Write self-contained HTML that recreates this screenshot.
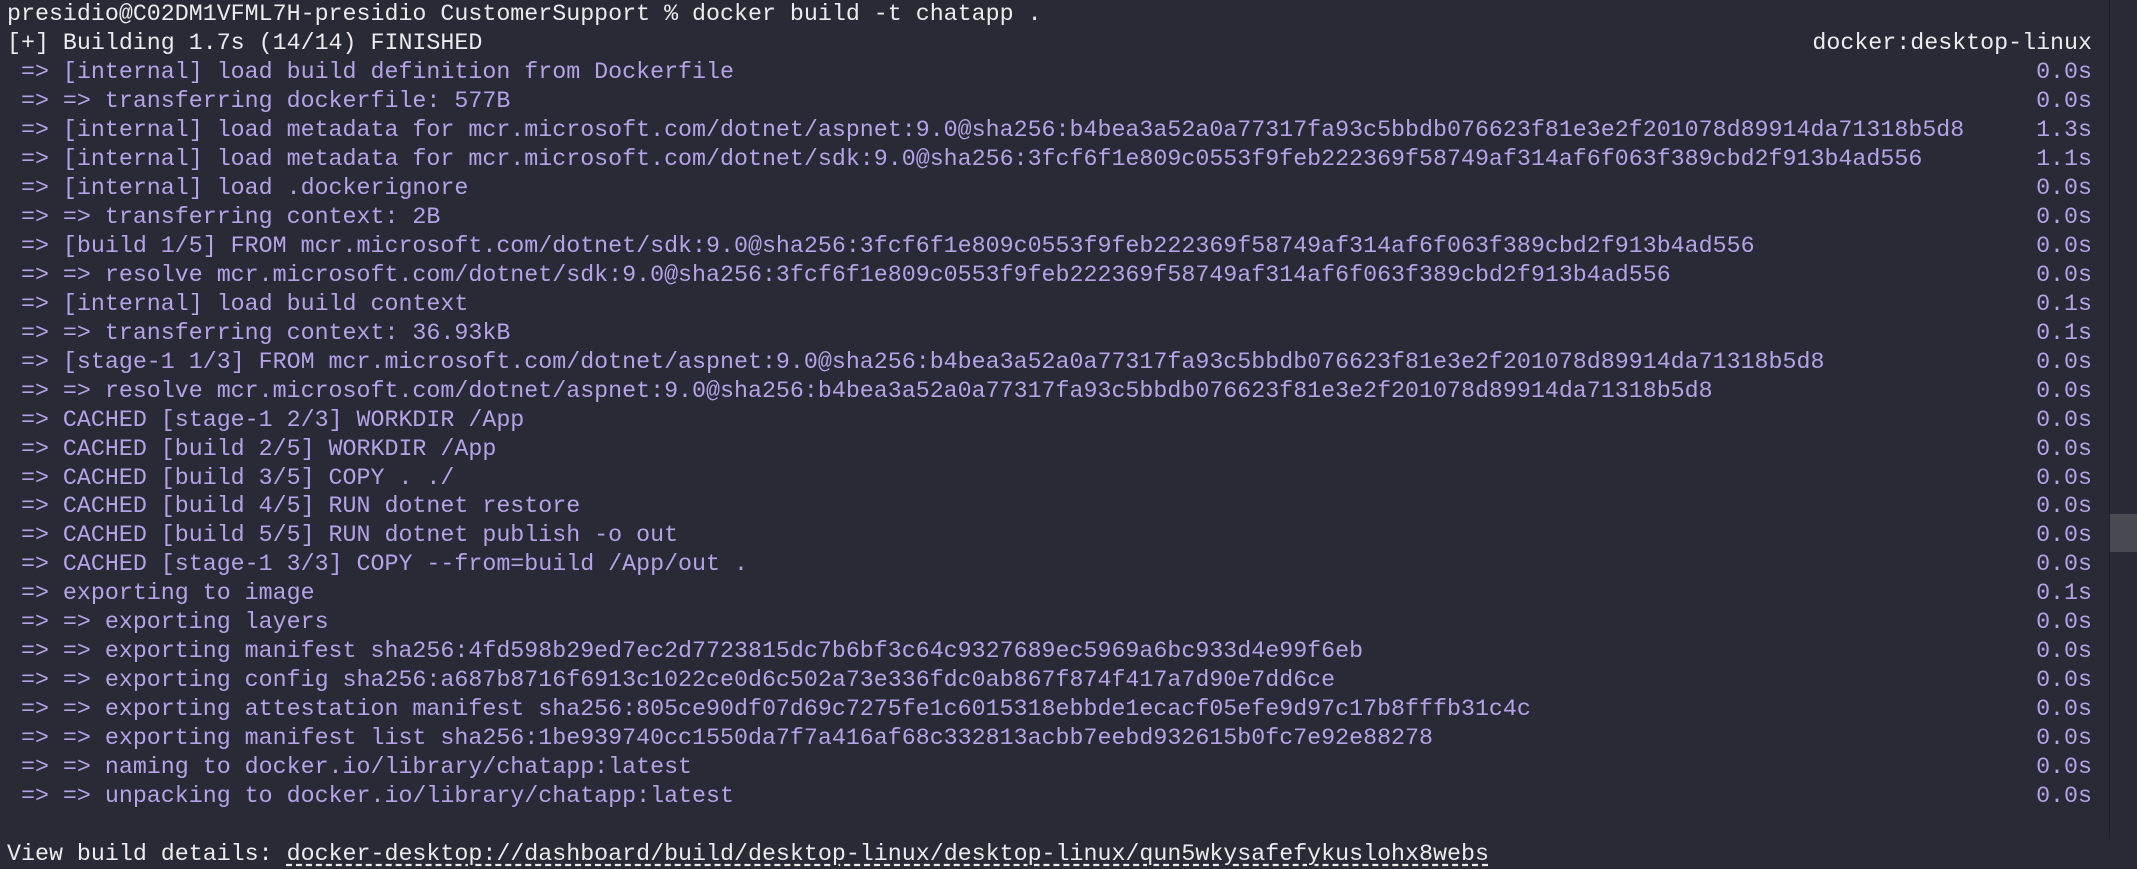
<!DOCTYPE html>
<html><head><meta charset="utf-8"><style>
html,body{margin:0;padding:0;background:#282a36;width:2137px;height:839px;overflow:hidden}
#t{position:absolute;left:7px;top:0px;width:2085px;font-family:"Liberation Mono",monospace;font-size:23.3px;line-height:28.97px;color:#b6a2e8}
.l{height:28.97px;position:relative;white-space:pre}
.l .r{position:absolute;right:0;top:0}
.w{color:#ececec}
.u{text-decoration:underline dashed;text-underline-offset:4px}
#sb{position:absolute;left:2109px;top:0;width:1px;height:839px;background:#1e1f27}
#th{position:absolute;left:2110px;top:514px;width:27px;height:38px;background:#4a4b52}
</style></head><body>
<div id="t"><div class="l w">presidio@C02DM1VFML7H-presidio CustomerSupport % docker build -t chatapp .</div><div class="l w">[+] Building 1.7s (14/14) FINISHED<span class="r">docker:desktop-linux</span></div><div class="l"> =&gt; [internal] load build definition from Dockerfile<span class="r">0.0s</span></div><div class="l"> =&gt; =&gt; transferring dockerfile: 577B<span class="r">0.0s</span></div><div class="l"> =&gt; [internal] load metadata for mcr.microsoft.com/dotnet/aspnet:9.0@sha256:b4bea3a52a0a77317fa93c5bbdb076623f81e3e2f201078d89914da71318b5d8<span class="r">1.3s</span></div><div class="l"> =&gt; [internal] load metadata for mcr.microsoft.com/dotnet/sdk:9.0@sha256:3fcf6f1e809c0553f9feb222369f58749af314af6f063f389cbd2f913b4ad556<span class="r">1.1s</span></div><div class="l"> =&gt; [internal] load .dockerignore<span class="r">0.0s</span></div><div class="l"> =&gt; =&gt; transferring context: 2B<span class="r">0.0s</span></div><div class="l"> =&gt; [build 1/5] FROM mcr.microsoft.com/dotnet/sdk:9.0@sha256:3fcf6f1e809c0553f9feb222369f58749af314af6f063f389cbd2f913b4ad556<span class="r">0.0s</span></div><div class="l"> =&gt; =&gt; resolve mcr.microsoft.com/dotnet/sdk:9.0@sha256:3fcf6f1e809c0553f9feb222369f58749af314af6f063f389cbd2f913b4ad556<span class="r">0.0s</span></div><div class="l"> =&gt; [internal] load build context<span class="r">0.1s</span></div><div class="l"> =&gt; =&gt; transferring context: 36.93kB<span class="r">0.1s</span></div><div class="l"> =&gt; [stage-1 1/3] FROM mcr.microsoft.com/dotnet/aspnet:9.0@sha256:b4bea3a52a0a77317fa93c5bbdb076623f81e3e2f201078d89914da71318b5d8<span class="r">0.0s</span></div><div class="l"> =&gt; =&gt; resolve mcr.microsoft.com/dotnet/aspnet:9.0@sha256:b4bea3a52a0a77317fa93c5bbdb076623f81e3e2f201078d89914da71318b5d8<span class="r">0.0s</span></div><div class="l"> =&gt; CACHED [stage-1 2/3] WORKDIR /App<span class="r">0.0s</span></div><div class="l"> =&gt; CACHED [build 2/5] WORKDIR /App<span class="r">0.0s</span></div><div class="l"> =&gt; CACHED [build 3/5] COPY . ./<span class="r">0.0s</span></div><div class="l"> =&gt; CACHED [build 4/5] RUN dotnet restore<span class="r">0.0s</span></div><div class="l"> =&gt; CACHED [build 5/5] RUN dotnet publish -o out<span class="r">0.0s</span></div><div class="l"> =&gt; CACHED [stage-1 3/3] COPY --from=build /App/out .<span class="r">0.0s</span></div><div class="l"> =&gt; exporting to image<span class="r">0.1s</span></div><div class="l"> =&gt; =&gt; exporting layers<span class="r">0.0s</span></div><div class="l"> =&gt; =&gt; exporting manifest sha256:4fd598b29ed7ec2d7723815dc7b6bf3c64c9327689ec5969a6bc933d4e99f6eb<span class="r">0.0s</span></div><div class="l"> =&gt; =&gt; exporting config sha256:a687b8716f6913c1022ce0d6c502a73e336fdc0ab867f874f417a7d90e7dd6ce<span class="r">0.0s</span></div><div class="l"> =&gt; =&gt; exporting attestation manifest sha256:805ce90df07d69c7275fe1c6015318ebbde1ecacf05efe9d97c17b8fffb31c4c<span class="r">0.0s</span></div><div class="l"> =&gt; =&gt; exporting manifest list sha256:1be939740cc1550da7f7a416af68c332813acbb7eebd932615b0fc7e92e88278<span class="r">0.0s</span></div><div class="l"> =&gt; =&gt; naming to docker.io/library/chatapp:latest<span class="r">0.0s</span></div><div class="l"> =&gt; =&gt; unpacking to docker.io/library/chatapp:latest<span class="r">0.0s</span></div><div class="l"></div><div class="l w">View build details: <span class="u">docker-desktop://dashboard/build/desktop-linux/desktop-linux/qun5wkysafefykuslohx8webs</span></div></div>
<div id="sb"></div><div id="th"></div>
</body></html>
